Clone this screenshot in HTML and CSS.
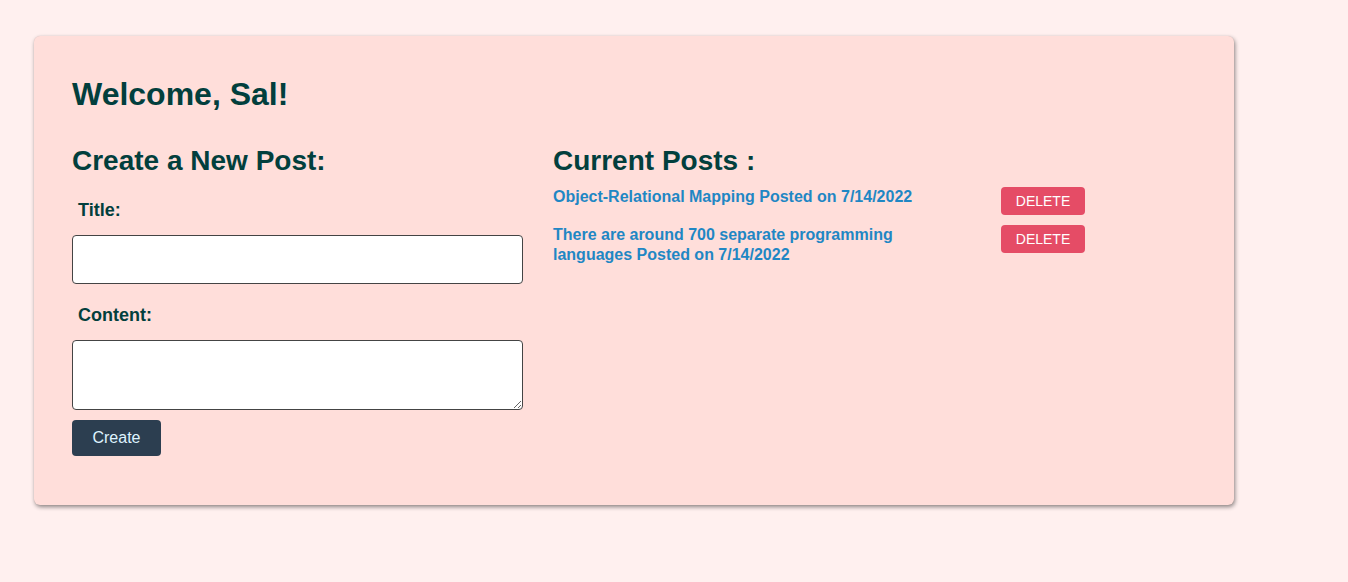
FILE: index.html
```html
<!DOCTYPE html>
<html>
<head>
<meta charset="utf-8">
<link rel="stylesheet" href="styles.css">
</head>
<body>
<main class="card">
  <h1 class="welcome">Welcome, Sal!</h1>
  <div class="columns">
    <section class="create">
      <h2 class="heading">Create a New Post:</h2>
      <label class="label" for="title">Title:</label>
      <input class="field" id="title" type="text">
      <label class="label label-content" for="content">Content:</label>
      <textarea class="field area" id="content"></textarea>
      <button class="create-btn">Create</button>
    </section>
    <section class="posts">
      <h2 class="heading">Current Posts :</h2>
      <div class="post">
        <a class="post-link">Object-Relational Mapping Posted on 7/14/2022</a>
        <button class="delete-btn">DELETE</button>
      </div>
      <div class="post">
        <a class="post-link">There are around 700 separate programming languages Posted on 7/14/2022</a>
        <button class="delete-btn">DELETE</button>
      </div>
    </section>
  </div>
</main>
</body>
</html>
```

FILE: styles.css
```css
html, body {
  margin: 0;
  padding: 0;
}
body {
  background: #fff0ef;
  font-family: "Liberation Sans", Arial, sans-serif;
  padding: 36px 0 0 34px;
  min-height: 582px;
  box-sizing: border-box;
}
.card {
  width: 1200px;
  box-sizing: border-box;
  background: #ffdeda;
  border-radius: 6px;
  box-shadow: 1px 2px 4px rgba(0, 0, 0, 0.45), 0 0 1px rgba(0, 0, 0, 0.15);
  padding: 40px 38px 49px 38px;
}
.welcome {
  margin: 0;
  font-size: 32px;
  line-height: 37px;
  color: #023f3d;
}
.columns {
  display: grid;
  grid-template-columns: 451px 1fr;
  column-gap: 30px;
  margin-top: 32px;
}
.heading {
  margin: 0;
  font-size: 28px;
  line-height: 32px;
  color: #023f3d;
}
.create {
  display: flex;
  flex-direction: column;
  align-items: flex-start;
}
.label {
  display: block;
  font-size: 18px;
  line-height: 21px;
  font-weight: bold;
  color: #023f3d;
  margin: 23px 0 0 6px;
}
.label-content {
  margin-top: 21px;
}
.field {
  display: block;
  width: 451px;
  height: 49px;
  box-sizing: border-box;
  margin-top: 14px;
  border: 1px solid #444;
  border-radius: 4px;
  background: #fff;
  font-family: inherit;
  font-size: 16px;
}
.area {
  height: 70px;
  resize: vertical;
}
.create-btn {
  margin-top: 10px;
  width: 89px;
  height: 36px;
  border: none;
  border-radius: 4px;
  background: #2c3e50;
  color: #dff3ff;
  font-family: inherit;
  font-size: 16px;
}
.posts {
  display: flex;
  flex-direction: column;
}
.post {
  display: grid;
  grid-template-columns: 448px 84px;
  align-items: start;
  margin-top: 9px;
}
.post-link {
  display: block;
  max-width: 400px;
  padding-top: 1px;
  font-size: 16px;
  line-height: 20px;
  font-weight: bold;
  color: #1f87c4;
}
.delete-btn {
  margin-top: 1px;
  width: 84px;
  height: 28px;
  border: none;
  border-radius: 4px;
  background: #e54c66;
  color: #fff;
  font-family: inherit;
  font-size: 14px;
}
```
